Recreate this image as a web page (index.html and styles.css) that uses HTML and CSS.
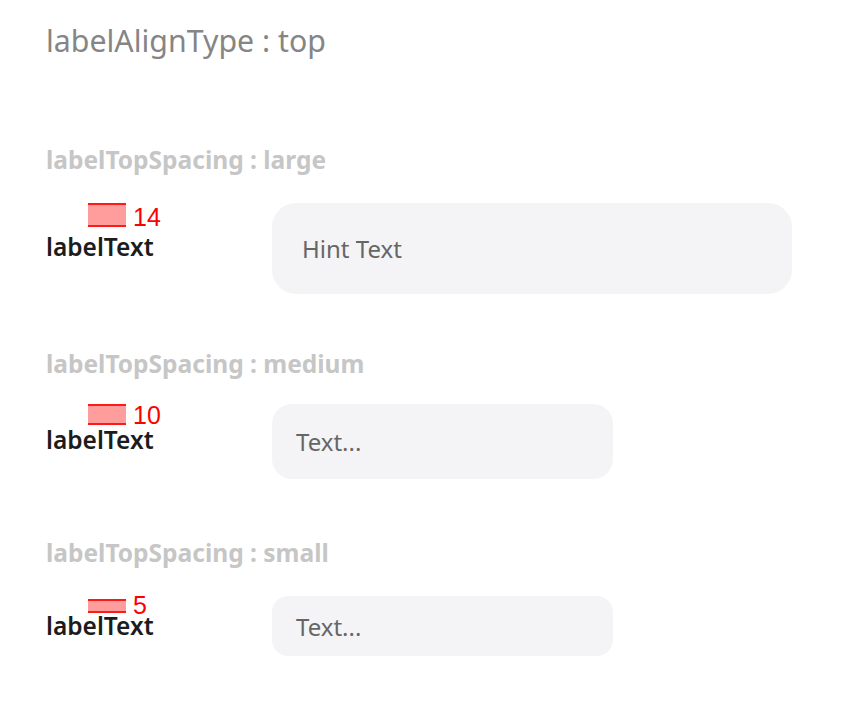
FILE: index.html
```html
<!DOCTYPE html>
<html>
<head>
<meta charset="utf-8">
<link rel="stylesheet" href="styles.css">
</head>
<body>
<div class="page">
  <div class="title">labelAlignType : top</div>

  <section class="sec sec-large">
    <div class="heading">labelTopSpacing : large</div>
    <div class="row">
      <div class="label-col">
        <div class="marker"><span class="rect"></span><span class="num">14</span></div>
        <div class="label">labelText</div>
      </div>
      <div class="field">Hint Text</div>
    </div>
  </section>

  <section class="sec sec-medium">
    <div class="heading">labelTopSpacing : medium</div>
    <div class="row">
      <div class="label-col">
        <div class="marker"><span class="rect"></span><span class="num">10</span></div>
        <div class="label">labelText</div>
      </div>
      <div class="field">Text...</div>
    </div>
  </section>

  <section class="sec sec-small">
    <div class="heading">labelTopSpacing : small</div>
    <div class="row">
      <div class="label-col">
        <div class="marker"><span class="rect"></span><span class="num">5</span></div>
        <div class="label">labelText</div>
      </div>
      <div class="field">Text...</div>
    </div>
  </section>
</div>
</body>
</html>
```

FILE: styles.css
```css
html, body {
  margin: 0;
  padding: 0;
  background: #ffffff;
}

body {
  font-family: "Noto Sans", "Open Sans", sans-serif;
}

.page {
  padding: 21px 0 0 46px;
}

.title {
  font-size: 30.3px;
  line-height: 40px;
  color: #858585;
  margin-bottom: 84px;
}

.heading {
  font-size: 24.5px;
  font-weight: 700;
  line-height: 30px;
  color: #c6c6c6;
}

.sec-large .row { margin-top: 28px; }
.sec-medium { margin-top: 55px; }
.sec-medium .row { margin-top: 25px; }
.sec-small { margin-top: 59px; }
.sec-small .row { margin-top: 28px; }

.row {
  display: flex;
  align-items: flex-start;
}

.label-col {
  width: 226px;
  display: flex;
  flex-direction: column;
}

.marker {
  display: flex;
  align-items: flex-end;
  gap: 7px;
  margin-left: 42px;
}

.rect {
  display: block;
  width: 38px;
  box-sizing: border-box;
  border-top: 2px solid #ff1a1a;
  border-bottom: 2px solid #ff1a1a;
  background: #ff9c9c;
}

.num {
  font-family: "Liberation Sans", Arial, sans-serif;
  font-size: 25px;
  line-height: 19px;
  color: #ff0000;
}

.sec-large .rect { height: 24px; }
.sec-medium .rect { height: 21px; }
.sec-small .rect { height: 14px; }
.sec-small .num { margin-bottom: -2px; }

.label {
  font-size: 24.5px;
  font-weight: 600;
  line-height: 22px;
  color: #1c1c1c;
}

.sec-large .label { margin-top: 9px; }
.sec-medium .label { margin-top: 4px; }
.sec-small .label { margin-top: 2px; }

.field {
  display: flex;
  align-items: center;
  box-sizing: border-box;
  background: #f4f4f6;
  color: #666666;
  font-size: 24px;
}

.sec-large .field {
  width: 520px;
  height: 91px;
  border-radius: 24px;
  padding-left: 30px;
}

.sec-medium .field {
  width: 341px;
  height: 75px;
  border-radius: 20px;
  padding-left: 24px;
}

.sec-small .field {
  width: 341px;
  height: 60px;
  border-radius: 16px;
  padding-left: 24px;
}
```
